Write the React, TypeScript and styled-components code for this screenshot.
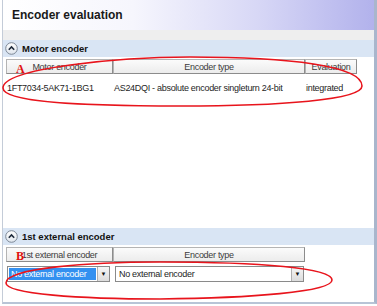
import React from "react";
import styled, { createGlobalStyle } from "styled-components";

const GlobalStyle = createGlobalStyle`
  html, body {
    margin: 0;
    padding: 0;
    background: #ffffff;
  }
  body {
    font-family: "Liberation Sans", Arial, sans-serif;
  }
`;

const Page = styled.div`
  position: relative;
  width: 377px;
  height: 306px;
  overflow: hidden;
`;

const Frame = styled.div`
  margin-left: 2px;
  width: 371px;
  height: 302px;
  display: flex;
  flex-direction: column;
  border-left: 1px solid #c4ccd8;
  border-right: 3px solid #a9b6cc;
  border-bottom: 2px solid #b8c4d6;
  box-sizing: content-box;
`;

const TitleBar = styled.div`
  height: 30px;
  display: flex;
  align-items: center;
  padding-left: 9px;
  background: linear-gradient(90deg, #ffffff 0%, #f6f6fd 35%, #d8d8f6 68%, #b2b2ec 100%);
  font-size: 12px;
  font-weight: bold;
  color: #1a1a1a;
`;

const Band = styled.div`
  height: 10px;
  background: #eeeeee;
`;

const SectionHeader = styled.div`
  height: 17px;
  display: flex;
  align-items: center;
  gap: 4px;
  padding-left: 2px;
  background: #d9e5f4;
  font-size: 9.5px;
  font-weight: bold;
  color: #111111;
`;

const Body = styled.div<{ $h: number }>`
  height: ${(p) => p.$h}px;
  background: #ffffff;
  padding: 2px 0 0 3px;
  box-sizing: border-box;
`;

const Grid = styled.div<{ $cols: string }>`
  display: grid;
  grid-template-columns: ${(p) => p.$cols};
`;

const HeadCell = styled.div`
  height: 15px;
  box-sizing: border-box;
  display: flex;
  align-items: center;
  justify-content: center;
  background: linear-gradient(#fbfbfb, #ececec);
  border: 1px solid #b4b4b4;
  border-right-color: #8c8c8c;
  border-bottom-color: #8c8c8c;
  font-size: 9px;
  letter-spacing: -0.3px;
  color: #3c3c3c;
  white-space: nowrap;
`;

const Cell = styled.div`
  height: 16px;
  margin-top: 6px;
  display: flex;
  align-items: center;
  padding-left: 1px;
  font-size: 9px;
  letter-spacing: -0.3px;
  color: #1e1e1e;
  white-space: nowrap;
`;

const ComboCell = styled.div<{ $pl: number; $pr: number }>`
  padding: 4px ${(p) => p.$pr}px 0 ${(p) => p.$pl}px;
`;

const Combo = styled.div`
  height: 16px;
  box-sizing: border-box;
  display: flex;
  border: 1px solid #8a8a8a;
  background: #ffffff;
`;

const ComboText = styled.div<{ $selected?: boolean }>`
  flex: 1;
  display: flex;
  align-items: center;
  padding-left: 2px;
  margin: 1px;
  font-size: 9px;
  letter-spacing: -0.3px;
  white-space: nowrap;
  overflow: hidden;
  background: ${(p) => (p.$selected ? "#3390f0" : "transparent")};
  color: ${(p) => (p.$selected ? "#ffffff" : "#1e1e1e")};
`;

const ComboButton = styled.div`
  width: 11px;
  display: flex;
  align-items: center;
  justify-content: center;
  background: linear-gradient(#f6f6f6, #dcdcdc);
  border-left: 1px solid #b0b0b0;
  font-size: 6px;
  color: #111111;
`;

const Spacer = styled.div`
  flex: 1;
  background: #ffffff;
`;

const Overlay = styled.svg`
  position: absolute;
  left: 0;
  top: 0;
  pointer-events: none;
`;

const Marker = styled.span<{ $x: number; $y: number }>`
  position: absolute;
  left: ${(p) => p.$x}px;
  top: ${(p) => p.$y}px;
  font-family: "Liberation Serif", "Times New Roman", serif;
  font-size: 12px;
  font-weight: bold;
  color: #e01010;
  line-height: 1;
`;

const CollapseIcon = () => (
  <svg width="13" height="13" viewBox="0 0 13 13">
    <defs>
      <linearGradient id="cg" x1="0" y1="0" x2="0" y2="1">
        <stop offset="0" stopColor="#ffffff" />
        <stop offset="1" stopColor="#dfe6ee" />
      </linearGradient>
    </defs>
    <circle cx="6.5" cy="6.5" r="5.8" fill="url(#cg)" stroke="#7d8896" strokeWidth="1" />
    <path d="M3.8 7.8 L6.5 5 L9.2 7.8" fill="none" stroke="#1e2a3a" strokeWidth="1.6" />
  </svg>
);

export default function App() {
  return (
    <>
      <GlobalStyle />
      <Page>
        <Frame>
          <TitleBar>Encoder evaluation</TitleBar>
          <Band />
          <SectionHeader>
            <CollapseIcon />
            Motor encoder
          </SectionHeader>
          <Body $h={171}>
            <Grid $cols="107px 192px 52px">
              <HeadCell>Motor encoder</HeadCell>
              <HeadCell>Encoder type</HeadCell>
              <HeadCell>Evaluation</HeadCell>
              <Cell>1FT7034-5AK71-1BG1</Cell>
              <Cell>AS24DQI - absolute encoder singleturn 24-bit</Cell>
              <Cell>integrated</Cell>
            </Grid>
          </Body>
          <SectionHeader>
            <CollapseIcon />
            1st external encoder
          </SectionHeader>
          <Body $h={56}>
            <Grid $cols="107px 192px">
              <HeadCell>1st external encoder</HeadCell>
              <HeadCell>Encoder type</HeadCell>
              <ComboCell $pl={1} $pr={3}>
                <Combo>
                  <ComboText $selected>No external encoder</ComboText>
                  <ComboButton>▼</ComboButton>
                </Combo>
              </ComboCell>
              <ComboCell $pl={2} $pr={1}>
                <Combo>
                  <ComboText>No external encoder</ComboText>
                  <ComboButton>▼</ComboButton>
                </Combo>
              </ComboCell>
            </Grid>
            <Spacer />
          </Body>
        </Frame>
        <Overlay width="377" height="306" viewBox="0 0 377 306">
          <path
            d="M3 88 C3 68 120 57 190 57 C290 57 362 66 362 86 C362 100 280 106 180 106 C80 106 3 102 3 88 Z"
            fill="none"
            stroke="#e8141c"
            strokeWidth="1.6"
          />
          <path
            d="M6 283 C6 268 90 262 160 262 C260 262 332 268 332 280 C332 292 250 298 160 299 C80 299 6 294 6 283 Z"
            fill="none"
            stroke="#e8141c"
            strokeWidth="1.6"
          />
        </Overlay>
        <Marker $x={16} $y={63}>A</Marker>
        <Marker $x={16} $y={250}>B</Marker>
      </Page>
    </>
  );
}
